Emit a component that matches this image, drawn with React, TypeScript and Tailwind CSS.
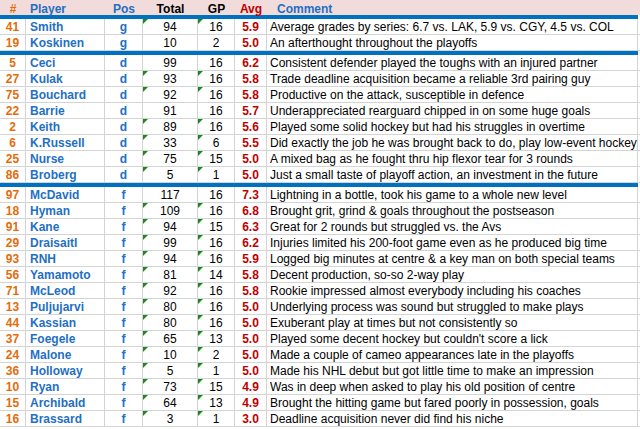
type Row = {
  num: string;
  name: string;
  pos: string;
  total: string;
  gp: string;
  avg: string;
  comment: string;
  flag?: boolean;
};

const goalies: Row[] = [
  { num: "41", name: "Smith", pos: "g", total: "94", gp: "16", avg: "5.9", comment: "Average grades by series: 6.7 vs. LAK, 5.9 vs. CGY, 4.5 vs. COL", flag: true },
  { num: "19", name: "Koskinen", pos: "g", total: "10", gp: "2", avg: "5.0", comment: "An afterthought throughout the playoffs" },
];

const defence: Row[] = [
  { num: "5", name: "Ceci", pos: "d", total: "99", gp: "16", avg: "6.2", comment: "Consistent defender played the toughs with an injured partner" },
  { num: "27", name: "Kulak", pos: "d", total: "93", gp: "16", avg: "5.8", comment: "Trade deadline acquisition became a reliable 3rd pairing guy", flag: true },
  { num: "75", name: "Bouchard", pos: "d", total: "92", gp: "16", avg: "5.8", comment: "Productive on the attack, susceptible in defence", flag: true },
  { num: "22", name: "Barrie", pos: "d", total: "91", gp: "16", avg: "5.7", comment: "Underappreciated rearguard chipped in on some huge goals" },
  { num: "2", name: "Keith", pos: "d", total: "89", gp: "16", avg: "5.6", comment: "Played some solid hockey but had his struggles in overtime", flag: true },
  { num: "6", name: "K.Russell", pos: "d", total: "33", gp: "6", avg: "5.5", comment: "Did exactly the job he was brought back to do, play low-event hockey", flag: true },
  { num: "25", name: "Nurse", pos: "d", total: "75", gp: "15", avg: "5.0", comment: "A mixed bag as he fought thru hip flexor tear for 3 rounds", flag: true },
  { num: "86", name: "Broberg", pos: "d", total: "5", gp: "1", avg: "5.0", comment: "Just a small taste of playoff action, an investment in the future", flag: true },
];

const forwards: Row[] = [
  { num: "97", name: "McDavid", pos: "f", total: "117", gp: "16", avg: "7.3", comment: "Lightning in a bottle, took his game to a whole new level" },
  { num: "18", name: "Hyman", pos: "f", total: "109", gp: "16", avg: "6.8", comment: "Brought grit, grind & goals throughout the postseason", flag: true },
  { num: "91", name: "Kane", pos: "f", total: "94", gp: "15", avg: "6.3", comment: "Great for 2 rounds but struggled vs. the Avs", flag: true },
  { num: "29", name: "Draisaitl", pos: "f", total: "99", gp: "16", avg: "6.2", comment: "Injuries limited his 200-foot game even as he produced big time", flag: true },
  { num: "93", name: "RNH", pos: "f", total: "94", gp: "16", avg: "5.9", comment: "Logged big minutes at centre & a key man on both special teams", flag: true },
  { num: "56", name: "Yamamoto", pos: "f", total: "81", gp: "14", avg: "5.8", comment: "Decent production, so-so 2-way play", flag: true },
  { num: "71", name: "McLeod", pos: "f", total: "92", gp: "16", avg: "5.8", comment: "Rookie impressed almost everybody including his coaches", flag: true },
  { num: "13", name: "Puljujarvi", pos: "f", total: "80", gp: "16", avg: "5.0", comment: "Underlying process was sound but struggled to make plays", flag: true },
  { num: "44", name: "Kassian", pos: "f", total: "80", gp: "16", avg: "5.0", comment: "Exuberant play at times but not consistently so", flag: true },
  { num: "37", name: "Foegele", pos: "f", total: "65", gp: "13", avg: "5.0", comment: "Played some decent hockey but couldn't score a lick", flag: true },
  { num: "24", name: "Malone", pos: "f", total: "10", gp: "2", avg: "5.0", comment: "Made a couple of cameo appearances late in the playoffs", flag: true },
  { num: "36", name: "Holloway", pos: "f", total: "5", gp: "1", avg: "5.0", comment: "Made his NHL debut but got little time to make an impression", flag: true },
  { num: "10", name: "Ryan", pos: "f", total: "73", gp: "15", avg: "4.9", comment: "Was in deep when asked to play his old position of centre", flag: true },
  { num: "15", name: "Archibald", pos: "f", total: "64", gp: "13", avg: "4.9", comment: "Brought the hitting game but fared poorly in possession, goals", flag: true },
  { num: "16", name: "Brassard", pos: "f", total: "3", gp: "1", avg: "3.0", comment: "Deadline acquisition never did find his niche", flag: true },
];

const cols = "grid grid-cols-[26px_79px_38px_55px_37px_32px_371px]";
const cell = "h-full border-r border-[#d4d4d4] flex items-center leading-none";

function Flag() {
  return (
    <span className="absolute left-0 top-0 h-0 w-0 border-t-[5px] border-r-[5px] border-t-[#1b8a1b] border-r-transparent" />
  );
}

function PlayerRow({ row }: { row: Row }) {
  return (
    <div className={`${cols} h-4 border-b border-[#d4d4d4]`}>
      <div className={`${cell} justify-center font-bold text-[#e46c0a]`}>{row.num}</div>
      <div className={`${cell} pl-[4px] font-bold text-[#1f6fc4]`}>{row.name}</div>
      <div className={`${cell} justify-center font-bold text-[#1f6fc4]`}>{row.pos}</div>
      <div className={`${cell} relative justify-center text-black`}>
        {row.flag && <Flag />}
        {row.total}
      </div>
      <div className={`${cell} relative justify-center text-black`}>
        {row.flag && <Flag />}
        {row.gp}
      </div>
      <div className={`${cell} justify-center font-bold text-[#c00000]`}>{row.avg}</div>
      <div className={`${cell} pl-[3px] whitespace-nowrap text-black`}>{row.comment}</div>
    </div>
  );
}

function Divider() {
  return <div className="h-1 w-[638px] bg-[#0070c0]" />;
}

export default function App() {
  return (
    <div className="h-[429px] w-[640px] overflow-hidden bg-white font-['Liberation_Sans',Arial,sans-serif] text-[12px]">
      <div className={`${cols} h-[15px] bg-[#f2dcdb] font-bold`}>
        <div className="flex items-center justify-center text-[#e46c0a]">#</div>
        <div className="flex items-center pl-[4px] text-[#1f6fc4]">Player</div>
        <div className="flex items-center justify-center text-[#1f6fc4]">Pos</div>
        <div className="flex items-center justify-center text-black">Total</div>
        <div className="flex items-center justify-center text-black">GP</div>
        <div className="flex items-center justify-center text-[#c00000]">Avg</div>
        <div className="flex items-center pl-[10px] text-[#1f6fc4]">Comment</div>
      </div>
      <Divider />
      {goalies.map((r) => (
        <PlayerRow key={r.num} row={r} />
      ))}
      <Divider />
      {defence.map((r) => (
        <PlayerRow key={r.num} row={r} />
      ))}
      <Divider />
      {forwards.map((r) => (
        <PlayerRow key={r.num} row={r} />
      ))}
    </div>
  );
}
